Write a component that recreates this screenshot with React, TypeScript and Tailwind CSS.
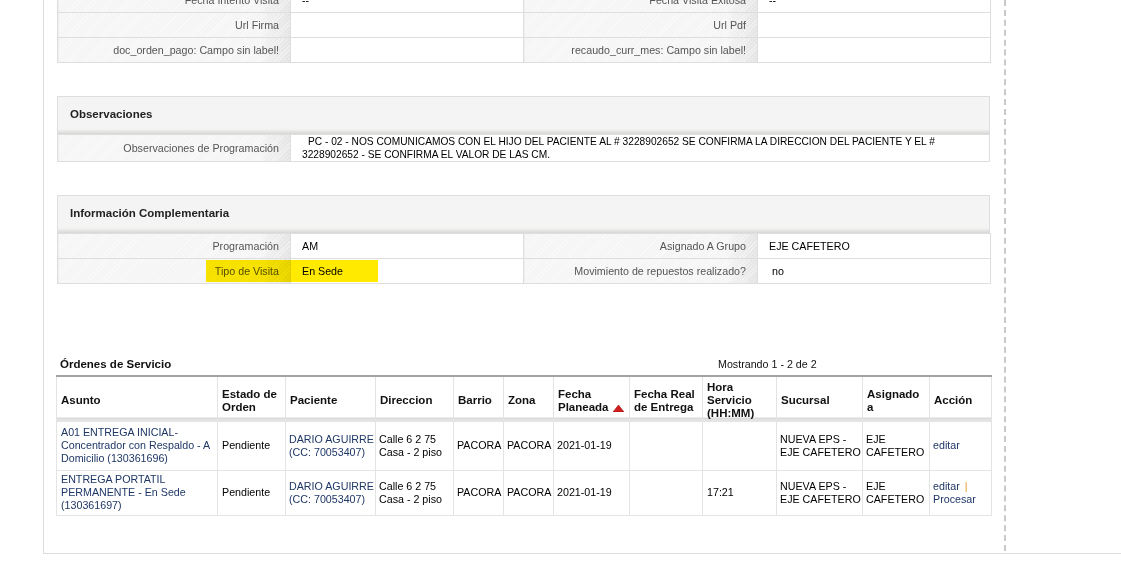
import React from 'react'

const labelBg =
  "bg-[repeating-linear-gradient(135deg,rgba(255,255,255,0.55)_0px,rgba(255,255,255,0.55)_1px,transparent_1px,transparent_3px),linear-gradient(to_right,#f5f5f5_0%,#f4f4f4_86%,#e2e2e2_100%)] bg-[length:100%_100%]"

function Label({ children }: { children: React.ReactNode }) {
  return (
    <td className={`border border-[#dedede] ${labelBg} whitespace-nowrap pr-[11px] text-right text-[#555]`}>
      {children}
    </td>
  )
}

function Value({ children, className = '' }: { children?: React.ReactNode; className?: string }) {
  return <td className={`border border-[#dedede] bg-white pl-[11px] text-black ${className}`}>{children}</td>
}

function SectionHeader({ title }: { title: string }) {
  return (
    <div className="flex h-[38px] items-center border border-b-0 border-[#dedede] bg-[linear-gradient(to_bottom,#f4f4f4_0px,#f4f4f4_32px,#e8e8e6_34px,#d7d7d5_37px,#e6e6e4_38px)] pb-[3px] pl-[12px] text-[11.5px] font-bold text-[#222]">
      {title}
    </div>
  )
}

const orderCols = [161, 68, 90, 78, 50, 50, 76, 73, 74, 86, 67, 62]

function SortArrow() {
  return (
    <svg width="11" height="7" viewBox="0 0 11 7" className="ml-[4px] inline-block align-[-1px]">
      <polygon points="5.5,0 11,7 0,7" fill="#d21f1f" stroke="#9b1010" strokeWidth="0.6" />
    </svg>
  )
}

const linkCls = 'text-[#1f3766]'
const td = 'border border-[#e4e4e4] align-middle whitespace-nowrap'

type Order = {
  asunto: string[]
  hora: string
  procesar: boolean
}

const orders: Order[] = [
  {
    asunto: ['A01 ENTREGA INICIAL-', 'Concentrador con Respaldo - A', 'Domicilio (130361696)'],
    hora: '',
    procesar: false,
  },
  {
    asunto: ['ENTREGA PORTATIL', 'PERMANENTE - En Sede', '(130361697)'],
    hora: '17:21',
    procesar: true,
  },
]

export default function App() {
  return (
    <div className="h-[571px] w-full overflow-hidden bg-white font-['Liberation_Sans',Arial,sans-serif] text-[10.7px] leading-[13px] text-black">
      <div className="ml-[43px] flex h-[554px] border-b border-l border-[#dcdcdc]">
        <div className="mb-[2px] w-[962px] shrink-0 border-r-2 border-dashed border-[#c9c9c9] pl-[13px]">
          {/* Datos generales (cortado arriba) */}
          <table className="mt-[-13px] w-[933px] table-fixed border-collapse">
            <colgroup>
              <col className="w-[233px]" />
              <col className="w-[233px]" />
              <col className="w-[234px]" />
              <col className="w-[233px]" />
            </colgroup>
            <tbody>
              <tr className="h-[25px]">
                <Label>Fecha Intento Visita</Label>
                <Value>--</Value>
                <Label>Fecha Visita Exitosa</Label>
                <Value>--</Value>
              </tr>
              <tr className="h-[25px]">
                <Label>Url Firma</Label>
                <Value />
                <Label>Url Pdf</Label>
                <Value />
              </tr>
              <tr className="h-[25px]">
                <Label>doc_orden_pago: Campo sin label!</Label>
                <Value />
                <Label>recaudo_curr_mes: Campo sin label!</Label>
                <Value />
              </tr>
            </tbody>
          </table>

          {/* Observaciones */}
          <div className="mt-[33px] w-[933px]">
            <SectionHeader title="Observaciones" />
            <table className="w-[933px] table-fixed border-collapse">
              <colgroup>
                <col className="w-[233px]" />
                <col />
              </colgroup>
              <tbody>
                <tr className="h-[27px]">
                  <Label>Observaciones de Programación</Label>
                  <Value className="py-0 text-[10.2px] leading-[13px]">
                    <span className="pl-[6px]">
                      PC - 02 - NOS COMUNICAMOS CON EL HIJO DEL PACIENTE AL # 3228902652 SE CONFIRMA LA DIRECCION DEL PACIENTE Y EL #
                    </span>
                    <br />
                    3228902652 - SE CONFIRMA EL VALOR DE LAS CM.
                  </Value>
                </tr>
              </tbody>
            </table>
          </div>

          {/* Información Complementaria */}
          <div className="relative mt-[33px] w-[933px]">
            <SectionHeader title="Información Complementaria" />
            <table className="w-[933px] table-fixed border-collapse">
              <colgroup>
                <col className="w-[233px]" />
                <col className="w-[233px]" />
                <col className="w-[234px]" />
                <col className="w-[233px]" />
              </colgroup>
              <tbody>
                <tr className="h-[25px]">
                  <Label>Programación</Label>
                  <Value>AM</Value>
                  <Label>Asignado A Grupo</Label>
                  <Value>EJE CAFETERO</Value>
                </tr>
                <tr className="h-[25px]">
                  <Label>Tipo de Visita</Label>
                  <Value>En Sede</Value>
                  <Label>Movimiento de repuestos realizado?</Label>
                  <Value className="pl-[14px]">no</Value>
                </tr>
              </tbody>
            </table>
            <div className="pointer-events-none absolute left-[149px] top-[65px] h-[22px] w-[172px] bg-[#ffea00] mix-blend-multiply" />
          </div>

          {/* Órdenes de Servicio */}
          <div className="mt-[70px] flex h-[20px] items-center pl-[3px]">
            <span className="w-[658px] text-[11.5px] font-bold text-[#111]">Órdenes de Servicio</span>
            <span className="text-[#111]">Mostrando 1 - 2 de 2</span>
          </div>
          <table className="ml-[-1px] mt-[1px] w-[935px] table-fixed border-collapse border-t-2 border-[#a3a3a3]">
            <colgroup>
              {orderCols.map((w, i) => (
                <col key={i} style={{ width: w }} />
              ))}
            </colgroup>
            <thead>
              <tr className="h-[45px]">
                {[
                  'Asunto',
                  'Estado de Orden',
                  'Paciente',
                  'Direccion',
                  'Barrio',
                  'Zona',
                  'Fecha Planeada',
                  'Fecha Real de Entrega',
                  'Hora Servicio (HH:MM)',
                  'Sucursal',
                  'Asignado a',
                  'Acción',
                ].map((h) => (
                  <th
                    key={h}
                    className="border-x border-[#e4e4e4] bg-[linear-gradient(to_bottom,#ffffff_0px,#ffffff_40px,#d9d9d9_41px,#e2e2e2_43px,#eeeeee_45px)] px-[4px] pb-0 pt-[4px] text-left align-middle text-[11.5px] font-bold text-[#111]"
                  >
                    {h === 'Fecha Planeada' ? (
                      <>
                        Fecha
                        <br />
                        Planeada
                        <SortArrow />
                      </>
                    ) : (
                      h
                    )}
                  </th>
                ))}
              </tr>
            </thead>
            <tbody>
              {orders.map((o, i) => (
                <tr key={i} className={i === 0 ? 'h-[49px]' : 'h-[45px]'}>
                  <td className={`${td} px-[4px] ${linkCls}`}>
                    {o.asunto.map((l) => (
                      <div key={l}>{l}</div>
                    ))}
                  </td>
                  <td className={`${td} px-[4px]`}>Pendiente</td>
                  <td className={`${td} px-[3px] ${linkCls}`}>
                    <div>DARIO AGUIRRE</div>
                    <div>(CC: 70053407)</div>
                  </td>
                  <td className={`${td} px-[3px]`}>
                    <div>Calle 6 2 75</div>
                    <div>Casa - 2 piso</div>
                  </td>
                  <td className={`${td} px-[3px]`}>PACORA</td>
                  <td className={`${td} px-[3px]`}>PACORA</td>
                  <td className={`${td} px-[3px]`}>2021-01-19</td>
                  <td className={`${td} px-[4px]`} />
                  <td className={`${td} px-[4px]`}>{o.hora}</td>
                  <td className={`${td} px-[3px]`}>
                    <div>NUEVA EPS -</div>
                    <div>EJE CAFETERO</div>
                  </td>
                  <td className={`${td} px-[3px]`}>
                    <div>EJE</div>
                    <div>CAFETERO</div>
                  </td>
                  <td className={`${td} px-[3px] ${linkCls}`}>
                    {o.procesar ? (
                      <>
                        <div>
                          editar <span className="ml-[2px] text-[#e59a2f]">|</span>
                        </div>
                        <div>Procesar</div>
                      </>
                    ) : (
                      'editar'
                    )}
                  </td>
                </tr>
              ))}
            </tbody>
          </table>
        </div>
      </div>
    </div>
  )
}
